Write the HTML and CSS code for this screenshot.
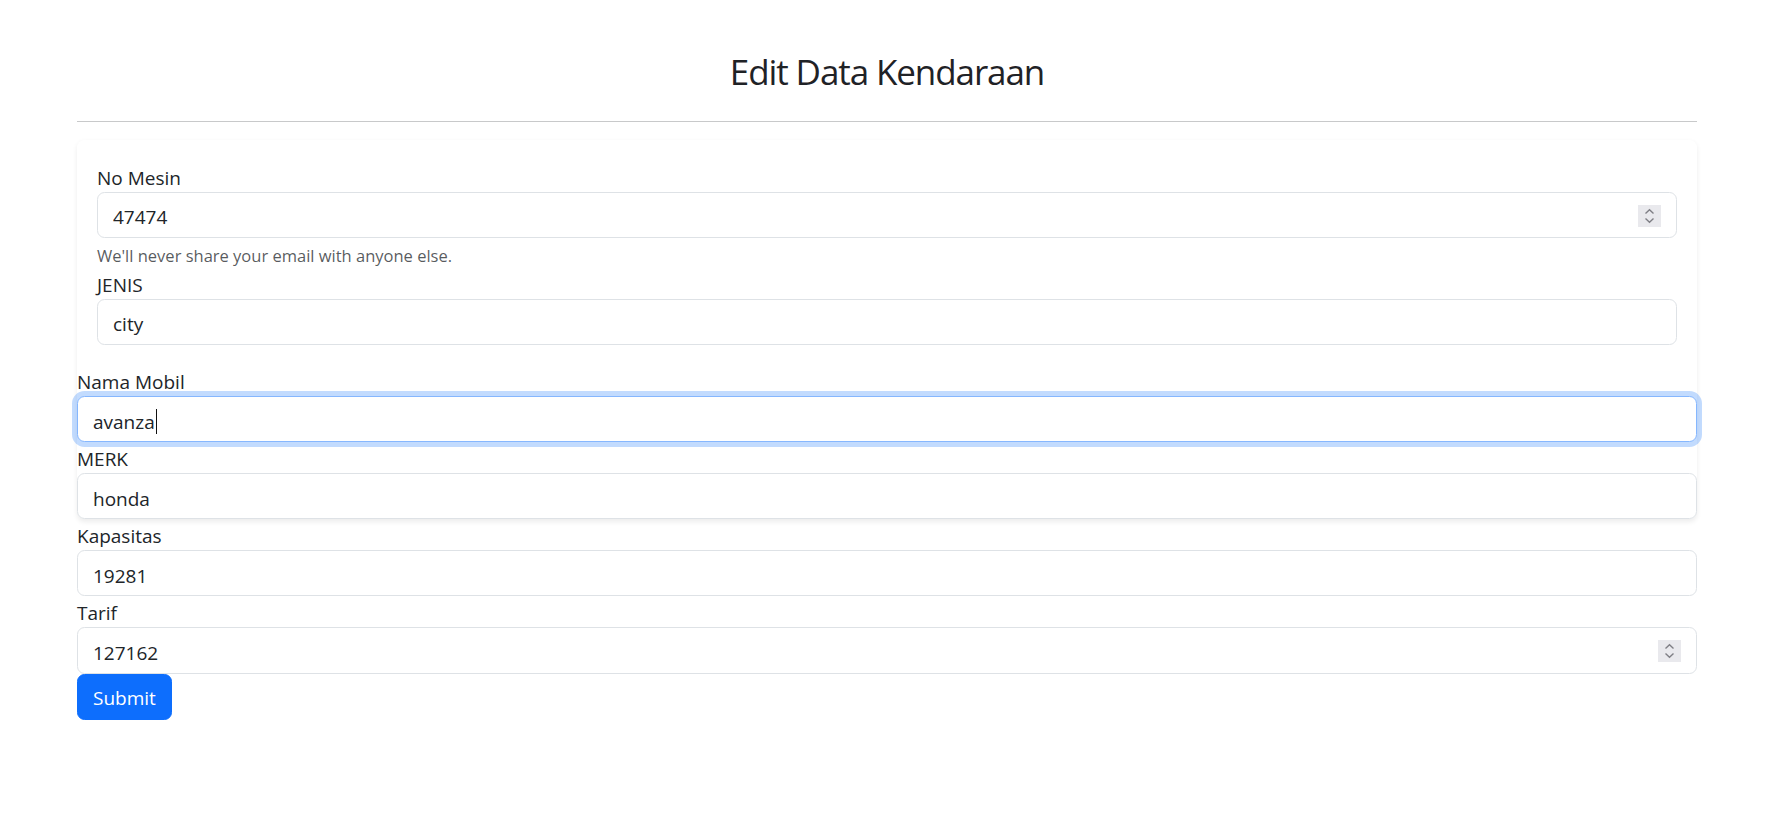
FILE: index.html
```html
<!DOCTYPE html>
<html lang="id">
<head>
<meta charset="utf-8">
<title>Edit Data Kendaraan</title>
<link rel="stylesheet" href="styles.css">
</head>
<body>
<div class="page">
  <h2 class="title">Edit Data Kendaraan</h2>
  <hr class="rule">
  <form class="form">
    <div class="card">
      <div class="card-body">
        <label class="label" for="mesin">No Mesin</label>
        <div class="field">
          <input class="input" id="mesin" type="text" value="47474">
          <svg class="spin" width="23" height="22" viewBox="0 0 23 22" aria-hidden="true">
            <rect x="0" y="0" width="23" height="22" fill="#e9e9ed"/>
            <polyline points="7.5,8.5 11.5,4.8 15.5,8.5" fill="none" stroke="#7f7f85" stroke-width="1.4"/>
            <polyline points="7.5,13.5 11.5,17.2 15.5,13.5" fill="none" stroke="#7f7f85" stroke-width="1.4"/>
          </svg>
        </div>
        <div class="help">We'll never share your email with anyone else.</div>
        <label class="label" for="jenis">JENIS</label>
        <input class="input" id="jenis" type="text" value="city">
      </div>
      <label class="label" for="nama">Nama Mobil</label>
      <div class="input is-focus" id="nama" role="textbox">avanza<span class="caret"></span></div>
      <label class="label" for="merk">MERK</label>
      <input class="input" id="merk" type="text" value="honda">
    </div>
    <label class="label" for="kapasitas">Kapasitas</label>
    <input class="input" id="kapasitas" type="text" value="19281">
    <label class="label" for="tarif">Tarif</label>
    <div class="field">
      <input class="input" id="tarif" type="text" value="127162">
      <svg class="spin spin-tarif" width="23" height="22" viewBox="0 0 23 22" aria-hidden="true">
        <rect x="0" y="0" width="23" height="22" fill="#e9e9ed"/>
        <polyline points="7.5,8.5 11.5,4.8 15.5,8.5" fill="none" stroke="#7f7f85" stroke-width="1.4"/>
        <polyline points="7.5,13.5 11.5,17.2 15.5,13.5" fill="none" stroke="#7f7f85" stroke-width="1.4"/>
      </svg>
    </div>
    <div class="actions">
      <button class="btn" type="button">Submit</button>
    </div>
  </form>
</div>
</body>
</html>
```
FILE: styles.css
```css
* { box-sizing: border-box; }

html, body {
  margin: 0;
  padding: 0;
  background: #ffffff;
}

body {
  font-family: "Open Sans", "Noto Sans", "Liberation Sans", sans-serif;
  font-size: 19px;
  color: #212529;
}

.page {
  width: 1620px;
  margin-left: 77px;
}

.title {
  margin: 0;
  padding-top: 48px;
  font-size: 35px;
  line-height: 48px;
  font-weight: 400;
  letter-spacing: -1.1px;
  text-align: center;
  color: #1f2226;
}

.rule {
  margin: 25px 0 0;
  border: 0;
  border-top: 1px solid #c8c9ca;
  height: 0;
}

.form {
  margin: 18px 0 0;
}

.card {
  background: #ffffff;
  border-radius: 7.5px;
  box-shadow: 0 2.5px 5px rgba(0, 0, 0, 0.075);
}

.card-body {
  padding: 21px 20px 20px 20px;
}

.label {
  display: block;
  padding-top: 4px;
  line-height: 26.5px;
  font-size: 19px;
}

.field {
  position: relative;
}

.input {
  display: block;
  width: 100%;
  height: 46.6px;
  margin: 0;
  padding: 10px 15px 5px;
  font-family: inherit;
  font-size: 19px;
  line-height: 30px;
  color: #212529;
  background: #ffffff;
  border: 1px solid #dee2e6;
  border-radius: 7.5px;
  outline: none;
}

.input.is-focus,
.input:focus {
  border-color: #86b7fe;
  box-shadow: 0 0 0 5px rgba(13, 110, 253, 0.25);
  outline: none;
}

.caret {
  display: inline-block;
  width: 1px;
  height: 25px;
  margin-left: 1px;
  vertical-align: -5px;
  background: #111111;
}

.spin {
  position: absolute;
  right: 16px;
  top: 13.5px;
  display: block;
}

.spin-tarif {
  top: 12.7px;
}

.help {
  margin-top: 5px;
  font-size: 16.5px;
  line-height: 25px;
  color: rgba(33, 37, 41, 0.75);
}

.actions {
  display: flex;
}

.btn {
  display: inline-block;
  height: 46.6px;
  padding: 8.5px 15px 6.5px;
  font-family: inherit;
  font-size: 19px;
  line-height: 30px;
  color: #ffffff;
  background: #0d6efd;
  border: 1px solid #0d6efd;
  border-radius: 7.5px;
  cursor: pointer;
}
```
